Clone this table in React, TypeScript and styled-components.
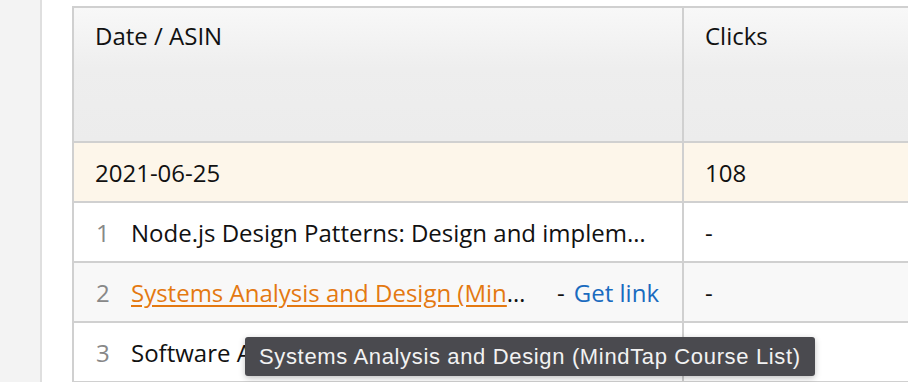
import React from 'react';
import styled, { createGlobalStyle } from 'styled-components';

const GlobalStyle = createGlobalStyle`
  html, body {
    margin: 0;
    padding: 0;
    background: #fff;
    overflow: hidden;
  }
  body {
    font-family: "Open Sans", "Liberation Sans", sans-serif;
    color: #111;
  }
`;

const Page = styled.div`
  display: flex;
  height: 100vh;
  width: 100vw;
  overflow: hidden;
`;

const Sidebar = styled.aside`
  width: 40px;
  flex: none;
  background: #f3f3f3;
  border-right: 2px solid #dfdfdf;
`;

const Main = styled.main`
  flex: 1;
  padding: 6px 0 0 30px;
  overflow: hidden;
`;

const TableWrap = styled.div`
  position: relative;
  width: 1000px;
`;

const Table = styled.table`
  width: 100%;
  border-collapse: collapse;
  table-layout: fixed;
  border: 2px solid #d0d0d0;
  font-size: 24px;
`;

const HeadCell = styled.th`
  height: 122px;
  padding: 11px 20px 0 21px;
  vertical-align: top;
  text-align: left;
  font-weight: 400;
  border: 2px solid #d0d0d0;
  background: linear-gradient(#f8f8f8, #eeeeee 45%, #ececec);
`;

const Row = styled.tr<{ $tone?: 'date' | 'hover' }>`
  background: ${(p) =>
    p.$tone === 'date' ? '#fdf6ea' : p.$tone === 'hover' ? '#f8f8f8' : '#fff'};
`;

const Cell = styled.td`
  height: 57px;
  padding: 1px 20px 0 21px;
  border: 2px solid #d0d0d0;
  vertical-align: middle;
  white-space: nowrap;
`;

const ItemLine = styled.div`
  display: flex;
  align-items: center;
  min-width: 0;
  padding-right: 3px;
`;

const Rank = styled.span`
  width: 35px;
  flex: none;
  padding-left: 1px;
  color: #888;
`;

const Title = styled.span`
  flex: 1;
  min-width: 0;
  overflow: hidden;
  text-overflow: ellipsis;
  white-space: nowrap;
  color: #111;
`;

const TitleLink = styled.a`
  color: #e47911;
  text-decoration: underline;
  text-underline-offset: 3px;
`;

const Actions = styled.span`
  flex: none;
  margin-left: 30px;
  color: #111;
`;

const GetLink = styled.a`
  color: #1a6bbf;
  text-decoration: none;
  margin-left: 9px;
`;

const Tooltip = styled.div`
  position: absolute;
  left: 173px;
  top: 331px;
  padding: 0 14px;
  height: 39px;
  line-height: 39px;
  background: #4a4a4f;
  color: #f2f2f2;
  border-radius: 3px;
  font-family: "Liberation Sans", Arial, sans-serif;
  font-size: 22px;
  letter-spacing: 0.65px;
  white-space: nowrap;
  box-shadow: 0 2px 6px rgba(0, 0, 0, 0.25);
`;

const items = [
  { n: 1, title: 'Node.js Design Patterns: Design and implement production-grade Node.js applications' },
  { n: 2, title: 'Systems Analysis and Design (MindTap Course List)', hover: true },
  { n: 3, title: 'Software Architecture in Practice' },
];

export default function App() {
  return (
    <>
      <GlobalStyle />
      <Page>
        <Sidebar />
        <Main>
          <TableWrap>
            <Table>
              <colgroup>
                <col style={{ width: 610 }} />
                <col />
              </colgroup>
              <thead>
                <tr>
                  <HeadCell>Date / ASIN</HeadCell>
                  <HeadCell>Clicks</HeadCell>
                </tr>
              </thead>
              <tbody>
                <Row $tone="date">
                  <Cell>2021-06-25</Cell>
                  <Cell>108</Cell>
                </Row>
                {items.map((it) => (
                  <Row key={it.n} $tone={it.hover ? 'hover' : undefined}>
                    <Cell>
                      <ItemLine>
                        <Rank>{it.n}</Rank>
                        <Title>
                          {it.hover ? <TitleLink href="#">{it.title}</TitleLink> : it.title}
                        </Title>
                        {it.hover && (
                          <Actions>
                            -<GetLink href="#">Get link</GetLink>
                          </Actions>
                        )}
                      </ItemLine>
                    </Cell>
                    <Cell>-</Cell>
                  </Row>
                ))}
              </tbody>
            </Table>
            <Tooltip>Systems Analysis and Design (MindTap Course List)</Tooltip>
          </TableWrap>
        </Main>
      </Page>
    </>
  );
}
